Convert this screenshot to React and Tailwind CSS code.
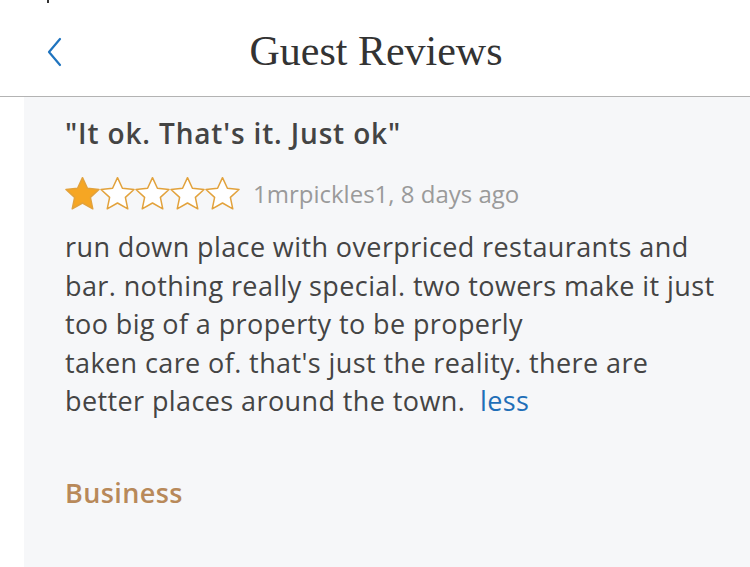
const Star = ({ filled }) => (
  <svg width="35" height="40" viewBox="1.5 0 21 24" className="shrink-0">
    <path
      d="M12 2.2l2.95 6.35 6.95.78-5.17 4.72 1.43 6.85L12 17.4l-6.16 3.5 1.43-6.85L2.1 9.33l6.95-.78z"
      fill={filled ? '#f6a623' : '#ffffff'}
      stroke="#e2a23c"
      strokeWidth="0.9"
      strokeLinejoin="round"
    />
  </svg>
);

export default function App() {
  const lines = [
    'run down place with overpriced restaurants and',
    'bar. nothing really special. two towers make it just',
    'too big of a property to be properly',
    "taken care of. that's just the reality. there are",
  ];

  return (
    <div className="w-[750px] h-[567px] overflow-hidden bg-white" style={{ fontFamily: '"Open Sans", sans-serif' }}>
      {/* header */}
      <div className="relative h-[97px] border-b border-[#b3b3b3] flex items-center justify-center">
        <div className="absolute left-[47px] top-0 w-[2px] h-[3px] bg-[#333]" />
        <button className="absolute left-[40px] top-[32px] p-1">
          <svg width="20" height="32" viewBox="0 0 20 32" fill="none">
            <path d="M16 3L5 16l11 13" stroke="#1f74bf" strokeWidth="2.2" strokeLinecap="round" strokeLinejoin="round" />
          </svg>
        </button>
        <h1
          className="text-[42px] leading-none text-[#333] mt-[6px] ml-[2px]"
          style={{ fontFamily: '"Liberation Serif", serif' }}
        >
          Guest Reviews
        </h1>
      </div>

      <div className="flex h-[470px]">
        <div className="w-[24px] bg-white" />
        <div className="flex-1 bg-[#f6f7f9] pl-[41px] pt-[18px]">
          <h2 className="text-[28px] leading-[36px] font-semibold tracking-[0.85px] text-[#444]">
            "It ok. That's it. Just ok"
          </h2>

          <div className="flex items-center h-[38px] mt-[24px]">
            <div className="flex">
              <Star filled />
              <Star />
              <Star />
              <Star />
              <Star />
            </div>
            <span className="ml-[13px] text-[24px] text-[#9a9a9a]">1mrpickles1, 8 days ago</span>
          </div>

          <div className="mt-[15px] text-[27px] leading-[38.5px] tracking-[0.4px] text-[#444]">
            {lines.map((l) => (
              <div key={l}>{l}</div>
            ))}
            <div>
              better places around the town.&nbsp; <span className="text-[#1f6fb8]">less</span>
            </div>
          </div>

          <div className="mt-[54px] text-[27px] leading-[36px] font-semibold tracking-[0.4px] text-[#b8895a]">
            Business
          </div>
        </div>
      </div>
    </div>
  );
}
